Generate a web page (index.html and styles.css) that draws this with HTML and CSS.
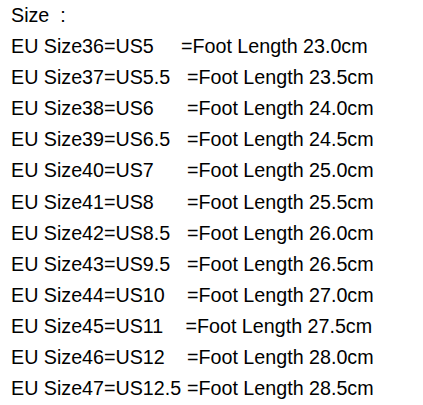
FILE: index.html
```html
<!DOCTYPE html>
<html lang="en">
<head>
  <meta charset="UTF-8" />
  <meta name="viewport" content="width=device-width, initial-scale=1.0"/>
  <title>Size Chart</title>
  <link rel="stylesheet" href="styles.css">
</head>
<body>

  <div class="size-chart">
    <div class="title">Size&nbsp;&nbsp;:</div>

    <div class="row tight"><span>EU Size36=US5</span><span>=Foot Length 23.0cm</span></div>
    <div class="row"><span>EU Size37=US5.5</span><span>=Foot Length 23.5cm</span></div>
    <div class="row"><span>EU Size38=US6</span><span>=Foot Length 24.0cm</span></div>
    <div class="row"><span>EU Size39=US6.5</span><span>=Foot Length 24.5cm</span></div>
    <div class="row"><span>EU Size40=US7</span><span>=Foot Length 25.0cm</span></div>
    <div class="row"><span>EU Size41=US8</span><span>=Foot Length 25.5cm</span></div>
    <div class="row"><span>EU Size42=US8.5</span><span>=Foot Length 26.0cm</span></div>
    <div class="row"><span>EU Size43=US9.5</span><span>=Foot Length 26.5cm</span></div>
    <div class="row"><span>EU Size44=US10</span><span>=Foot Length 27.0cm</span></div>
    <div class="row nudge"><span>EU Size45=US11</span><span>=Foot Length 27.5cm</span></div>
    <div class="row"><span>EU Size46=US12</span><span>=Foot Length 28.0cm</span></div>
    <div class="row"><span>EU Size47=US12.5</span><span>=Foot Length 28.5cm</span></div>
  </div>

</body>
</html>
```

FILE: styles.css
```css
body {
  margin: 0;
  background: #fff;
  color: #000;
  font-family: "Liberation Sans", Arial, sans-serif;
}

.size-chart {
  padding: 0 0 0 11px;
  font-size: 19.7px;
  line-height: 31.1px;
}

.row {
  display: grid;
  grid-template-columns: 176px auto;
  white-space: nowrap;
}

/* the first row's second column sits a little further left */
.row.tight span:last-child {
  margin-left: -6px;
}

.row.nudge span:last-child {
  margin-left: -1.5px;
}
```
